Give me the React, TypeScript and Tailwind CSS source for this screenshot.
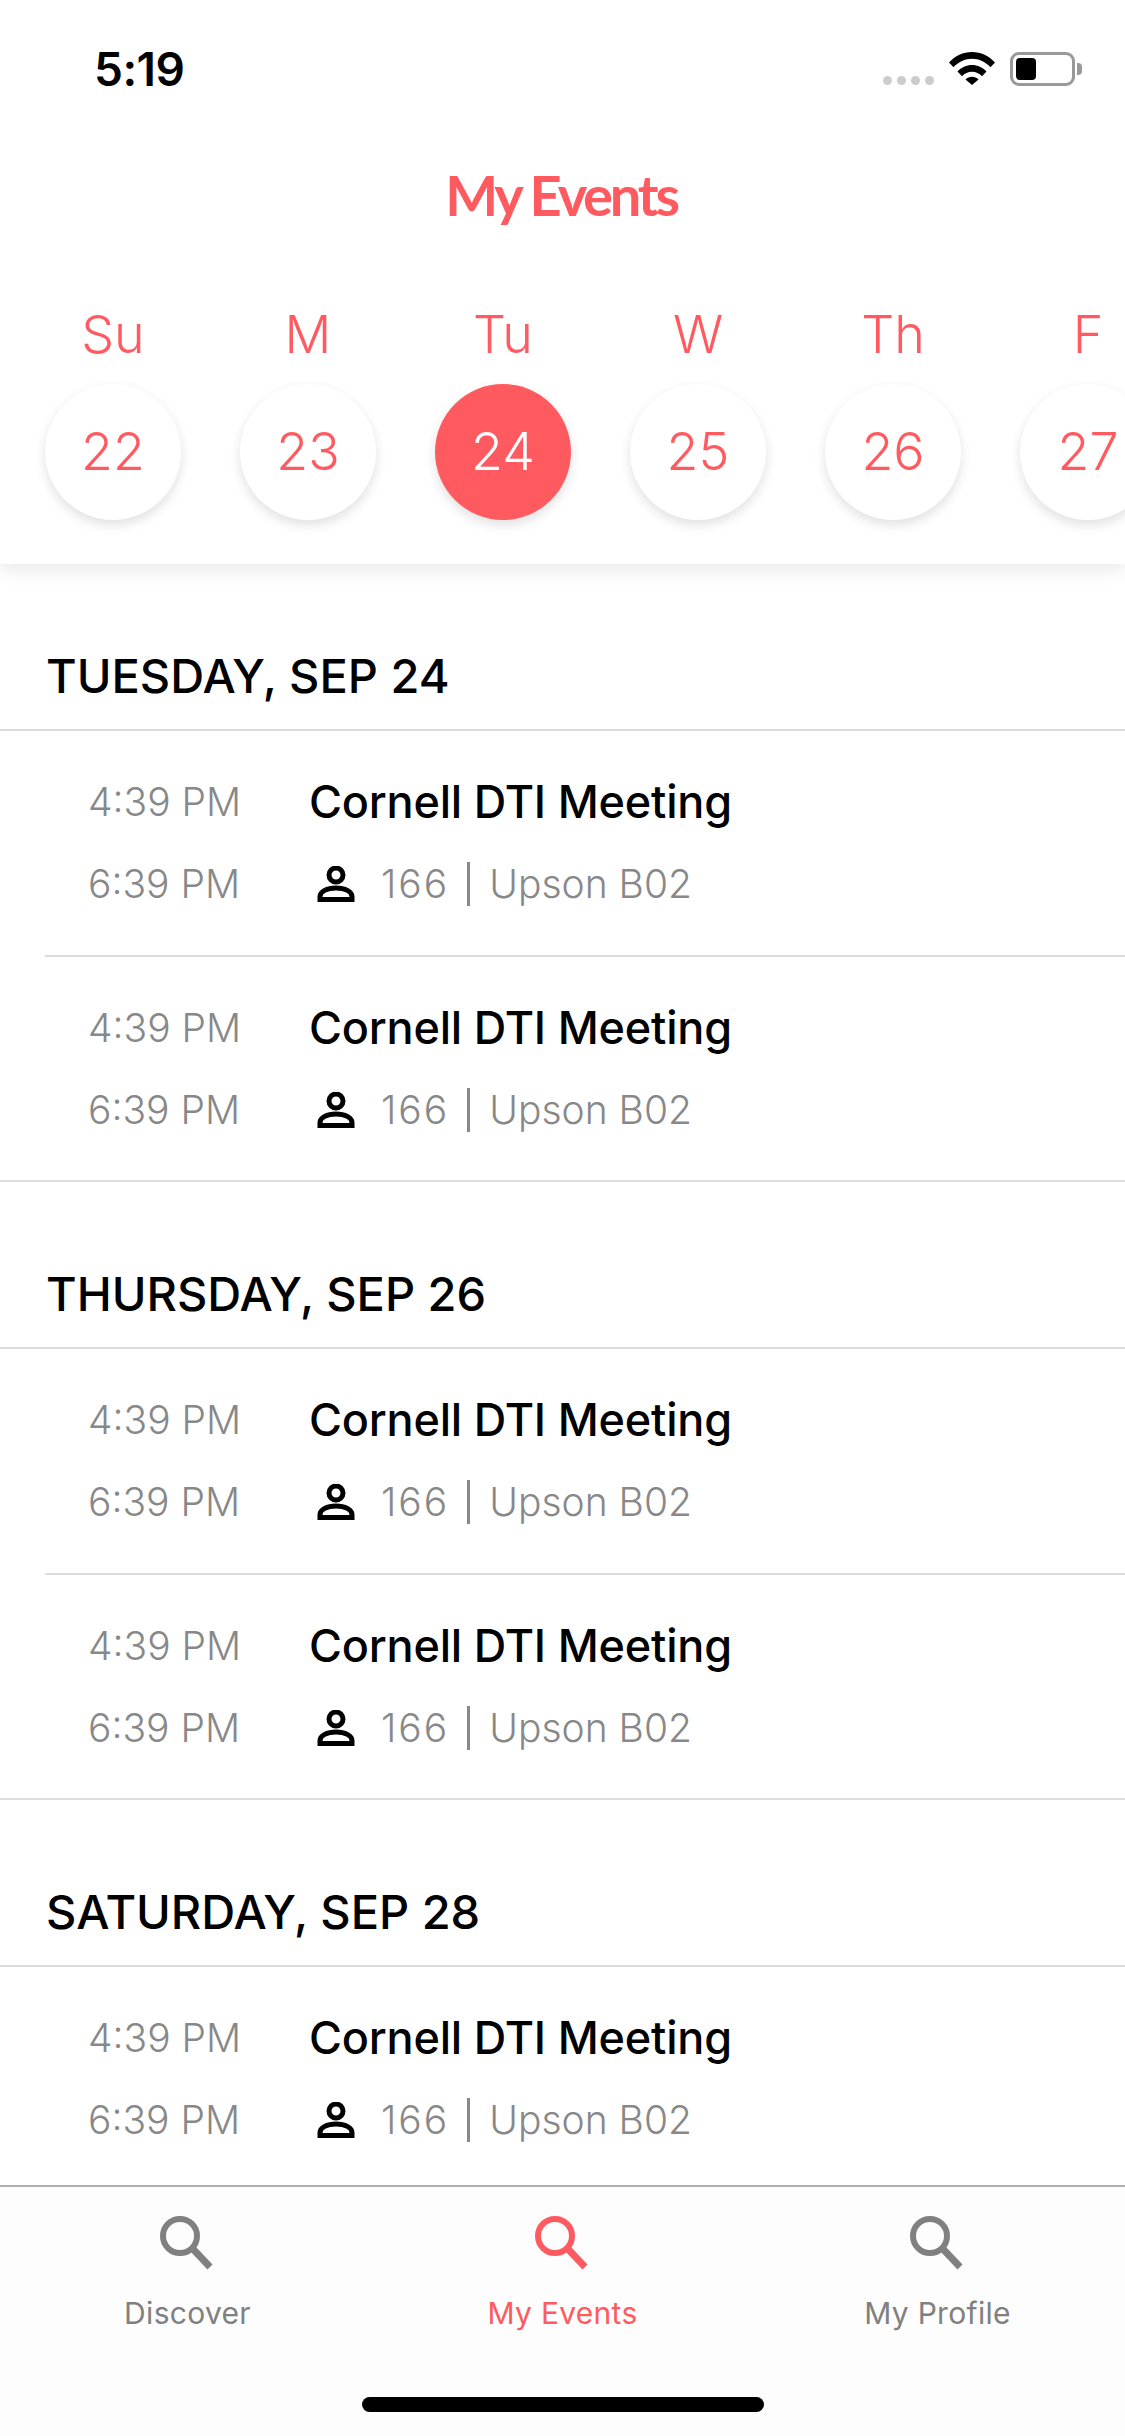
const RED = "text-[#ff5a60]";

const days = [
  ["Su", "22"],
  ["M", "23"],
  ["Tu", "24"],
  ["W", "25"],
  ["Th", "26"],
  ["F", "27"],
];

function Person() {
  return (
    <svg width="38" height="36" viewBox="0 0 38 36" fill="none" stroke="#000" strokeWidth="5" className="shrink-0">
      <circle cx="19" cy="9" r="7" />
      <path d="M3 33.5v-3c0-5 7-8.5 16-8.5s16 3.500 16 8.500v3z" />
    </svg>
  );
}

function Search({ color }: { color: string }) {
  return (
    <svg width="54" height="54" viewBox="0 0 54 54" fill="none" stroke={color} className="-translate-x-[2px]">
      <circle cx="21" cy="20" r="17" strokeWidth="6" />
      <path d="M34 33l17 18" strokeWidth="7" />
    </svg>
  );
}

function Row({ divider }: { divider: boolean }) {
  return (
    <div className={`ml-[45px] flex ${divider ? "h-[226px] border-b-2 border-[#dcdcdc]" : "h-[223px]"}`}>
      <div className="w-[265px] shrink-0 pl-[43px] pt-[43px] text-[#888888] text-[39px] leading-[56px] font-[350]">
        <div>4:39 PM</div>
        <div className="mt-[26px]">6:39 PM</div>
      </div>
      <div className="-ml-[1px] pt-[43px]">
        <div className="text-black text-[45px] leading-[56px] font-medium tracking-[-0.2px]">Cornell DTI Meeting</div>
        <div className="mt-[26px] h-[56px] flex items-center text-[#888888] text-[39px] font-[350]">
          <span className="ml-[8px] mr-[26px] flex"><Person /></span>
          <span className="tracking-[2px]">166</span>
          <span className="ml-[18px] mr-[19px] w-[3px] h-[44px] bg-[#888888]" />
          <span>Upson B02</span>
        </div>
      </div>
    </div>
  );
}

function Section({ title, rows }: { title: string; rows: number }) {
  return (
    <section>
      <div className="h-[167px] pl-[46px] flex items-end pb-[25px] border-b-2 border-[#dcdcdc] text-black text-[47px] leading-[56px] font-medium">
        {title}
      </div>
      {Array.from({ length: rows }).map((_, i) => (
        <Row key={i} divider={i < rows - 1} />
      ))}
      <div className="border-b-2 border-[#dcdcdc]" />
    </section>
  );
}

function Tab({ label, active }: { label: string; active?: boolean }) {
  return (
    <div className="flex-1 flex flex-col items-center pt-[29px]">
      <Search color={active ? "#ff5a60" : "#808080"} />
      <div className={`mt-[25px] text-[30px] leading-[36px] tracking-[0.3px] ${active ? RED : "text-[#808080]"}`}>{label}</div>
    </div>
  );
}

export default function App() {
  return (
    <div className="w-[1125px] h-[2436px] bg-white overflow-hidden flex flex-col font-['Inter',sans-serif]">
      <header className="relative z-10 h-[564px] shrink-0 bg-white shadow-[0_6px_18px_rgba(0,0,0,0.09)] overflow-hidden">
        <div className="h-[136px] flex items-start justify-between pl-[94px] pr-[43px] pt-[42px]">
          <div className="text-[46px] leading-[54px] font-semibold text-black tracking-[-0.5px]">5:19</div>
          <div className="flex items-start pt-[10px]">
            <div className="flex gap-[5px] mt-[24px] mr-[15px]">
              <span className="size-[9px] rounded-full bg-[#cccccc]" />
              <span className="size-[9px] rounded-full bg-[#cccccc]" />
              <span className="size-[9px] rounded-full bg-[#cccccc]" />
              <span className="size-[9px] rounded-full bg-[#cccccc]" />
            </div>
            <svg width="46" height="33" viewBox="0 0 46 33" className="mr-[15px]" fill="#000">
              <path d="M0 10.500C6 4 14 0 23 0s17 4 23 10.500l-4.500 4.800C36.500 10 30 6.800 23 6.800S9.500 10 4.500 15.300z" />
              <path d="M8.500 19.500C12.300 15.500 17.400 13 23 13s10.700 2.500 14.500 6.500L33 24.300C30.300 21.500 26.800 19.800 23 19.800s-7.300 1.700-10 4.500z" />
              <path d="M16.500 27.500C18.200 25.800 20.500 24.800 23 24.800s4.800 1 6.500 2.700L23 33z" />
            </svg>
            <div className="w-[65px] h-[34px] rounded-[9px] border-[3px] border-[#999999] p-[3px] flex">
              <span className="w-[20px] h-full rounded-[4px] bg-black" />
            </div>
            <span className="mt-[11px] ml-[2px] w-[5px] h-[12px] rounded-r-[4px] bg-[#999999]" />
          </div>
        </div>
        <h1 className={`mt-[19px] pr-[3px] text-center text-[56px] leading-[80px] font-['Lato',sans-serif] font-bold tracking-[-3.2px] ${RED}`}>My Events</h1>
        <div className="mt-[67px] pl-[45px] flex gap-[59px]">
          {days.map(([d, n]) => (
            <div key={d} className="w-[136px] shrink-0 flex flex-col items-center">
              <div className={`h-[66px] text-[52px] leading-[66px] font-[350] ${RED}`}>{d}</div>
              <div
                className={`mt-[16px] size-[136px] rounded-full flex items-center justify-center text-[52px] font-[350] shadow-[0_5px_12px_rgba(0,0,0,0.12)] ${
                  n === "24" ? "bg-[#ff5a60] text-white" : `bg-white ${RED}`
                }`}
              >
                {n}
              </div>
            </div>
          ))}
        </div>
      </header>
      <main className="flex-1 min-h-0 overflow-hidden">
        <Section title="TUESDAY, SEP 24" rows={2} />
        <Section title="THURSDAY, SEP 26" rows={2} />
        <Section title="SATURDAY, SEP 28" rows={1} />
      </main>
      <nav className="h-[251px] shrink-0 bg-[#fdfdfd] border-t-2 border-[#b0b0b0] flex flex-col">
        <div className="flex-1 flex">
          <Tab label="Discover" />
          <Tab label="My Events" active />
          <Tab label="My Profile" />
        </div>
        <div className="mb-[24px] self-center w-[402px] h-[15px] rounded-full bg-black" />
      </nav>
    </div>
  );
}
